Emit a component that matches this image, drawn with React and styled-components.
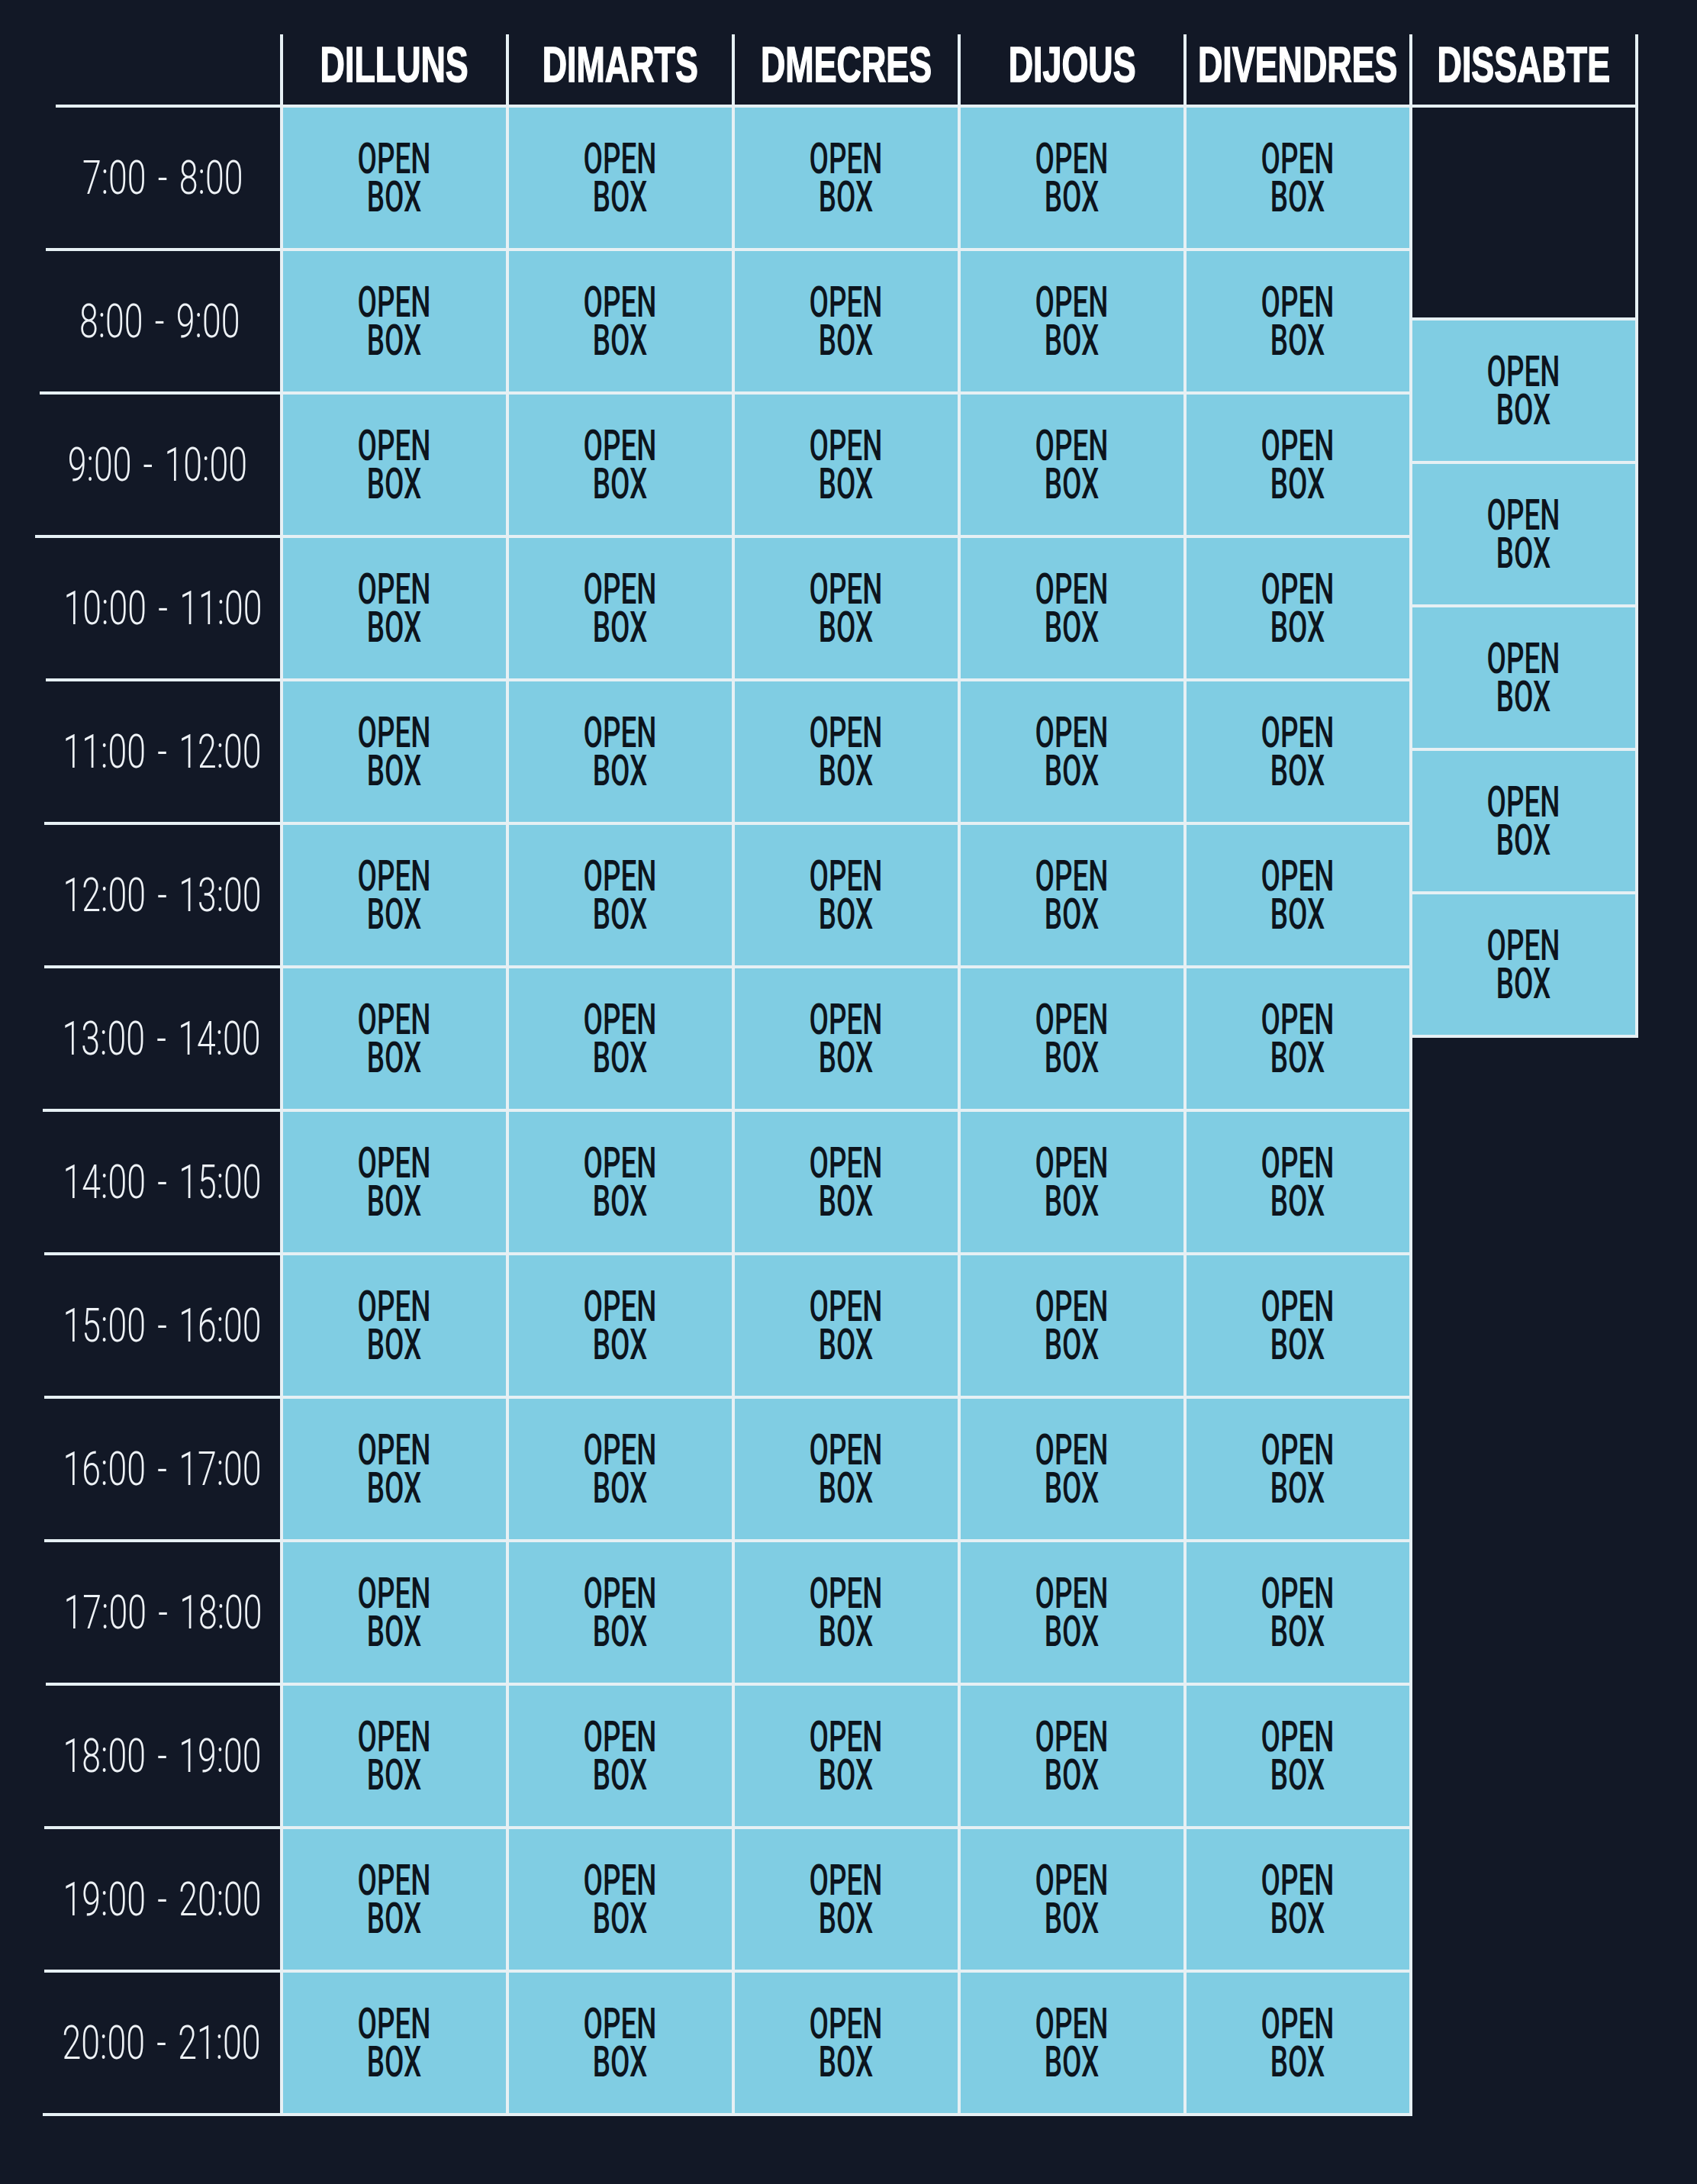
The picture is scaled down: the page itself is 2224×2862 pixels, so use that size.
import React from "react";
import styled, { createGlobalStyle } from "styled-components";

const LINE = "#e6f0f4";
const BG = "#121826";
const CELL = "#80cde3";

const GlobalStyle = createGlobalStyle`
  html, body {
    margin: 0;
    padding: 0;
    background: ${BG};
  }
`;

const Page = styled.div`
  display: flex;
  align-items: flex-start;
  width: 2224px;
  min-height: 2862px;
  box-sizing: border-box;
  padding: 45px 0 0 58px;
  background: ${BG};
  font-family: "Liberation Sans", Arial, sans-serif;
`;

const Week = styled.div`
  display: grid;
  grid-template-columns: 309px repeat(4, 296px) 300px;
  grid-template-rows: 96px repeat(14, 188px);
`;

const Corner = styled.div`
  margin-left: 15px;
  border-bottom: 4px solid ${LINE};
`;

const DayHead = styled.div`
  box-sizing: border-box;
  display: flex;
  align-items: center;
  justify-content: center;
  padding-bottom: 12px;
  border-left: ${(p) => (p.$noLeft ? "none" : `4px solid ${LINE}`)};
  border-right: ${(p) => (p.$right ? `4px solid ${LINE}` : "none")};
  border-bottom: 4px solid ${LINE};
  height: 96px;
`;

const DayName = styled.span`
  display: inline-block;
  white-space: nowrap;
  color: #ffffff;
  font-weight: 700;
  font-size: 64px;
  line-height: 1;
  -webkit-text-stroke: 1.5px #ffffff;
  transform: scaleX(0.7);
`;

const TimeCell = styled.div`
  box-sizing: border-box;
  display: flex;
  align-items: center;
  justify-content: center;
  margin-left: ${(p) => p.$indent}px;
  border-bottom: 4px solid ${LINE};
`;

const TimeText = styled.span`
  display: inline-block;
  white-space: nowrap;
  color: #eef2f6;
  font-family: "Roboto", "Liberation Sans", sans-serif;
  font-weight: 300;
  font-size: 62px;
  line-height: 1;
  word-spacing: 6px;
  transform: scaleX(0.72);
`;

const Slot = styled.div`
  box-sizing: border-box;
  display: flex;
  align-items: center;
  justify-content: center;
  background: ${CELL};
  border-left: ${(p) => (p.$noLeft ? "none" : `4px solid ${LINE}`)};
  border-right: ${(p) => (p.$right ? `4px solid ${LINE}` : "none")};
  border-bottom: 4px solid ${LINE};
  height: ${(p) => (p.$h ? `${p.$h}px` : "auto")};
`;

const SlotText = styled.span`
  display: inline-block;
  white-space: nowrap;
  text-align: center;
  color: #0c141d;
  font-family: "Roboto", "Liberation Sans", sans-serif;
  font-weight: 500;
  font-size: 55px;
  line-height: 50px;
  transform: scaleX(0.67);
`;

const Saturday = styled.div`
  display: flex;
  flex-direction: column;
  width: 296px;
`;

const Closed = styled.div`
  box-sizing: border-box;
  height: 279px;
  border-right: 4px solid ${LINE};
  border-bottom: 4px solid ${LINE};
`;

const DAYS = ["DILLUNS", "DIMARTS", "DMECRES", "DIJOUS", "DIVENDRES"];
const INDENTS = [2, -6, -12, 2, 0, 0, -2, 0, 0, 0, 2, 0, 0, -2];
const HOURS = Array.from({ length: 14 }, (_, i) => `${i + 7}:00 - ${i + 8}:00`);

const OpenBox = () => (
  <SlotText>
    OPEN
    <br />
    BOX
  </SlotText>
);

const App = () => (
  <>
    <GlobalStyle />
    <Page>
      <Week>
        <Corner />
        {DAYS.map((d, i) => (
          <DayHead key={d} $right={i === DAYS.length - 1}>
            <DayName>{d}</DayName>
          </DayHead>
        ))}
        {HOURS.map((h, r) => (
          <React.Fragment key={h}>
            <TimeCell $indent={INDENTS[r]}>
              <TimeText>{h}</TimeText>
            </TimeCell>
            {DAYS.map((d, i) => (
              <Slot key={d} $right={i === DAYS.length - 1}>
                <OpenBox />
              </Slot>
            ))}
          </React.Fragment>
        ))}
      </Week>
      <Saturday>
        <DayHead $noLeft $right>
          <DayName>DISSABTE</DayName>
        </DayHead>
        <Closed />
        {[0, 1, 2, 3, 4].map((n) => (
          <Slot key={n} $noLeft $right $h={188}>
            <OpenBox />
          </Slot>
        ))}
      </Saturday>
    </Page>
  </>
);

export default App;
